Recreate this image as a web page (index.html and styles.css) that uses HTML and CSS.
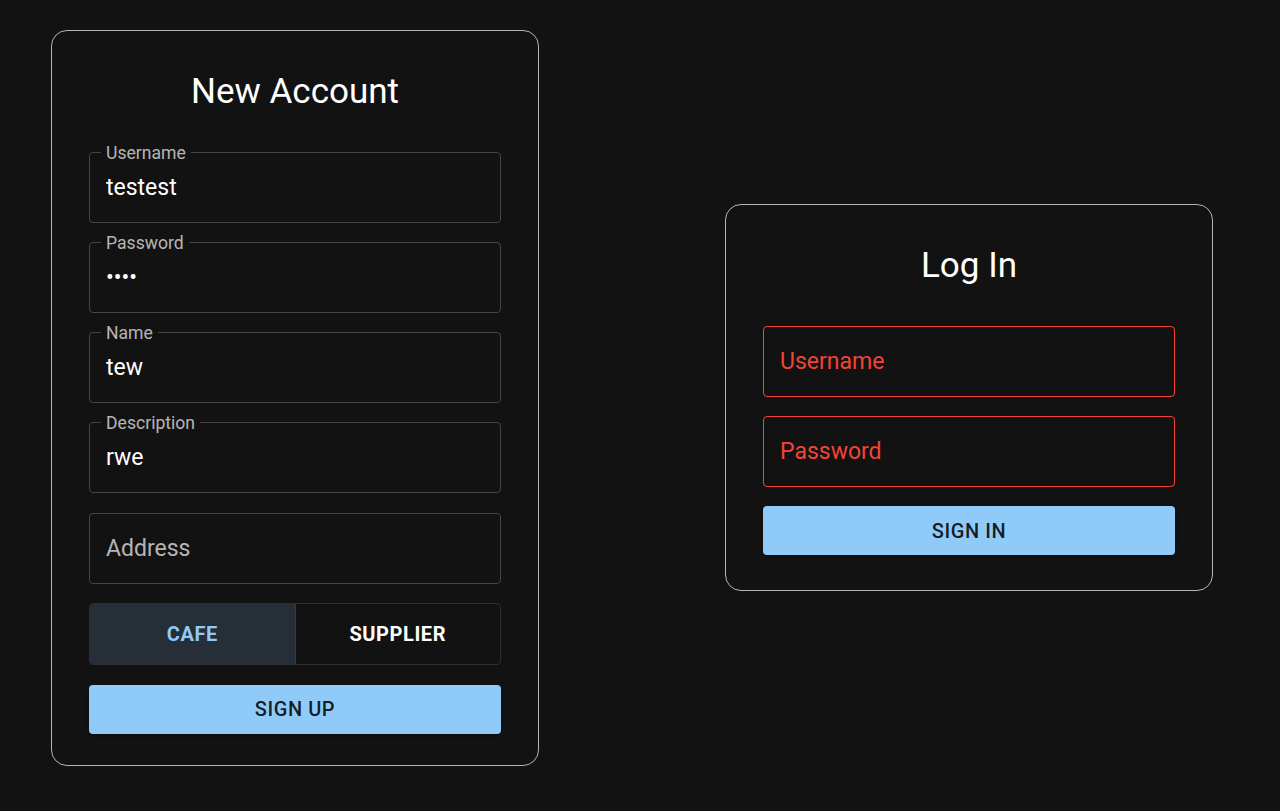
FILE: index.html
```html
<!DOCTYPE html>
<html lang="en">
<head>
<meta charset="utf-8">
<title>Cafe Accounts</title>
<link rel="stylesheet" href="styles.css">
</head>
<body>
<main class="page">
  <section class="card card--signup">
    <h1 class="card__title">New Account</h1>
    <form class="form">
      <div class="field">
        <label class="field__label">Username</label>
        <input class="field__input" type="text" value="testest">
      </div>
      <div class="field">
        <label class="field__label">Password</label>
        <input class="field__input" type="password" value="test">
      </div>
      <div class="field">
        <label class="field__label">Name</label>
        <input class="field__input" type="text" value="tew">
      </div>
      <div class="field">
        <label class="field__label">Description</label>
        <input class="field__input" type="text" value="rwe">
      </div>
      <div class="field">
        <input class="field__input" type="text" placeholder="Address">
      </div>
      <div class="toggle">
        <button type="button" class="toggle__btn toggle__btn--active">CAFE</button>
        <button type="button" class="toggle__btn">SUPPLIER</button>
      </div>
      <button type="button" class="btn">SIGN UP</button>
    </form>
  </section>

  <section class="card card--login">
    <h1 class="card__title">Log In</h1>
    <form class="form">
      <div class="field field--error">
        <input class="field__input" type="text" placeholder="Username">
      </div>
      <div class="field field--error">
        <input class="field__input" type="password" placeholder="Password">
      </div>
      <button type="button" class="btn">SIGN IN</button>
    </form>
  </section>
</main>
</body>
</html>
```
FILE: styles.css
```css
* {
  box-sizing: border-box;
}

html, body {
  margin: 0;
  padding: 0;
  background: #121212;
}

body {
  font-family: Roboto, "Noto Sans", "Liberation Sans", sans-serif;
  color: #ffffff;
  min-height: 811px;
}

.page {
  display: flex;
  align-items: center;
  gap: 186px;
  padding: 30px 0 30px 51px;
}

.card {
  width: 488px;
  border: 1px solid #b4b4b4;
  border-radius: 16px;
  padding: 39.5px 37px 31px;
  background: #121212;
}

.card--login {
  padding-bottom: 35px;
}

.card__title {
  margin: 0 0 39px;
  font-size: 35px;
  line-height: 42px;
  font-weight: 400;
  text-align: center;
  color: #ffffff;
}

.form {
  display: flex;
  flex-direction: column;
  gap: 19.25px;
}

.field {
  position: relative;
  height: 71px;
  border: 1px solid #454545;
  border-radius: 4px;
  display: flex;
  align-items: center;
}

.field__label {
  position: absolute;
  top: -10px;
  left: 11px;
  padding: 0 5px;
  font-size: 17.6px;
  line-height: 20px;
  color: rgba(255, 255, 255, 0.7);
  background: #121212;
}

.field__input {
  width: 100%;
  height: 100%;
  border: none;
  outline: none;
  background: transparent;
  padding: 0 16px;
  font-family: inherit;
  font-size: 23px;
  color: #ffffff;
}

.field__input::placeholder {
  color: rgba(255, 255, 255, 0.7);
  opacity: 1;
}

.field--error {
  border-color: #f44336;
}

.field--error .field__input::placeholder {
  color: #f44336;
}

.toggle {
  display: flex;
  height: 62.5px;
  border: 1px solid #2e2e2e;
  border-radius: 4px;
  overflow: hidden;
}

.toggle__btn {
  flex: 1;
  border: none;
  background: transparent;
  font-family: inherit;
  font-size: 20px;
  font-weight: 700;
  letter-spacing: 0.02857em;
  color: #ffffff;
  cursor: pointer;
}

.toggle__btn--active {
  background: #262f37;
  color: #90caf9;
  border-right: 1px solid #2e3a44;
}

.btn {
  height: 49px;
  border: none;
  border-radius: 4px;
  background: #90caf9;
  color: rgba(0, 0, 0, 0.87);
  font-family: inherit;
  font-size: 20px;
  font-weight: 500;
  letter-spacing: 0.02857em;
  box-shadow: 0 3px 1px -2px rgba(0, 0, 0, 0.2), 0 2px 2px 0 rgba(0, 0, 0, 0.14), 0 1px 5px 0 rgba(0, 0, 0, 0.12);
  cursor: pointer;
}
```
